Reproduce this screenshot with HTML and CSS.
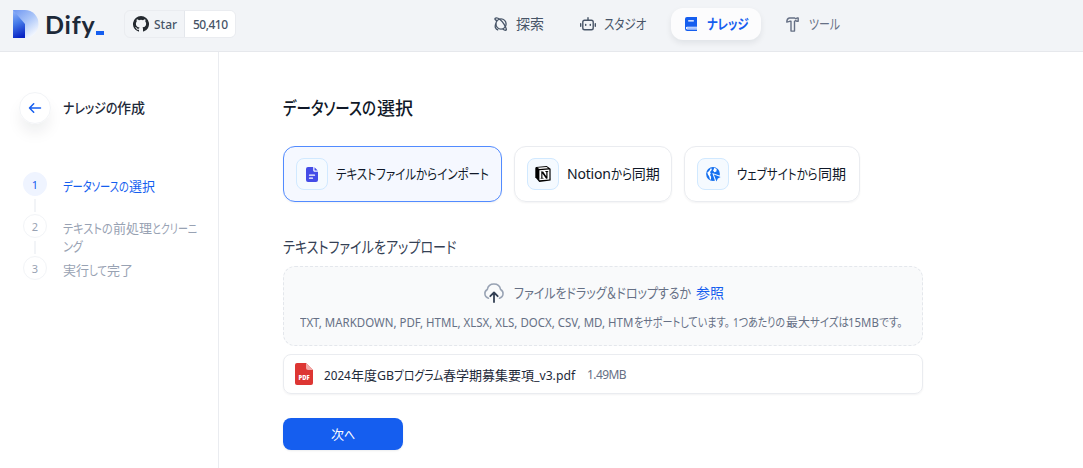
FILE: index.html
```html
<!DOCTYPE html>
<html lang="ja">
<head>
<meta charset="utf-8">
<title>Dify</title>
<link rel="stylesheet" href="styles.css">
</head>
<body>
<header class="topbar">
  <a class="brand">
    <svg class="brand-mark" width="26" height="28" viewBox="0 0 26 28">
      <defs>
        <linearGradient id="stem" x1="0.3" y1="0" x2="0.5" y2="1"><stop offset="0" stop-color="#8db0f8"/><stop offset=".45" stop-color="#467be9"/><stop offset="1" stop-color="#0723c4"/></linearGradient>
        <linearGradient id="bowl" x1="0" y1="0" x2=".75" y2="1"><stop offset="0" stop-color="#6e96f2"/><stop offset=".5" stop-color="#a9c4f8"/><stop offset="1" stop-color="#fafcff"/></linearGradient>
      </defs>
      <path d="M0 0h12a13.5 14 0 0 1 0 28H0z" fill="url(#bowl)"/>
      <path d="M0 0l12 14v14H0z" fill="url(#stem)"/>
    </svg>
    <span class="brand-name">Dify</span><span class="brand-cursor"></span>
  </a>
  <div class="stars">
    <span class="stars-label">
      <svg width="16" height="16" viewBox="0 0 16 16" fill="#24292f"><path d="M8 0a8 8 0 0 0-2.53 15.59c.4.07.55-.17.55-.38v-1.49c-2.23.48-2.7-.95-2.7-.95-.36-.92-.89-1.17-.89-1.17-.73-.5.05-.49.05-.49.81.06 1.23.83 1.23.83.72 1.23 1.88.87 2.34.67.07-.52.28-.88.51-1.08-1.78-.2-3.64-.89-3.64-3.95 0-.88.31-1.59.82-2.15-.08-.2-.36-1.01.08-2.12 0 0 .67-.21 2.2.82a7.6 7.6 0 0 1 4 0c1.53-1.04 2.2-.82 2.2-.82.44 1.11.16 1.92.08 2.12.51.56.82 1.27.82 2.15 0 3.07-1.87 3.75-3.65 3.95.29.25.54.73.54 1.48v2.2c0 .21.15.46.55.38A8 8 0 0 0 8 0z"/></svg>
      Star
    </span>
    <span class="stars-count">50,410</span>
  </div>
  <nav class="nav">
    <a class="nav-item explore">
      <svg width="14" height="14" viewBox="0 0 14 14" fill="none" stroke="#475467" stroke-width="1.3"><circle cx="7" cy="7" r="5.100"/><path d="M3.200 3.600C.8 3.200.4 1.600 1.700 1.100 4 .3 8 3.800 10 7.200s3 5.700 1.900 6c-.8.200-2-.3-3.300-1.300M1.900 6.500C.4 9.500 1.500 12.500 4.200 13"/></svg>
      <span>探索</span>
    </a>
    <a class="nav-item studio">
      <svg width="16" height="14" viewBox="0 0 16 14" fill="none" stroke="#475467" stroke-width="1.4" stroke-linecap="round"><rect x="2.800" y="3.200" width="10.400" height="9.600" rx="1.800"/><path d="M8 3V.8M.7 6.800v2.400M15.300 6.800v2.400"/><path d="M5.700 7.600v.6M10.300 7.600v.6" stroke-width="1.500"/></svg>
      <span class="fit fit-studio">スタジオ</span>
    </a>
    <a class="nav-item knowledge">
      <svg width="12" height="14" viewBox="0 0 12 14"><path d="M2 0h10v9.800H2.200a1.200 1.200 0 0 0 0 2.600H12V14H2.200A2.200 2.200 0 0 1 0 11.800V2a2 2 0 0 1 2-2z" fill="#155eef"/><path d="M2.200 10.300H12v1.600H2.200z" fill="#9bbcff"/><path d="M3.200 3.200h5.600v1.300H3.200z" fill="#fff"/></svg>
      <span class="fit fit-knowledge">ナレッジ</span>
    </a>
    <a class="nav-item tools">
      <svg width="13" height="15" viewBox="0 0 13 15" fill="none" stroke="#667085" stroke-width="1.400" stroke-linejoin="round"><path d="M3.400 1h5.300l1 .8 1.300-.8h1.200v3.300H11l-1.300-.7-1.200.7v9.800H5V4.300H3.700L.8 5.100C.8 3 1.800 1.400 3.400 1z"/></svg>
      <span class="fit fit-tools">ツール</span>
    </a>
  </nav>
</header>
<div class="body">
  <aside class="sidebar">
    <div class="side-head">
      <span class="back"><svg width="14" height="12" viewBox="0 0 14 12" fill="none" stroke="#155eef" stroke-width="1.500" stroke-linecap="round" stroke-linejoin="round"><path d="M12.500 6H1.500M5.700 1.800 1.500 6l4.200 4.200"/></svg></span>
      <span class="side-title"><span class="fit fit-side">ナレッジの</span>作成</span>
    </div>
    <ol class="steps">
      <li class="step active"><span class="num">1</span><span class="step-text"><span class="fit fit-s1">データソースの</span>選択</span></li>
      <li class="step"><span class="num">2</span><span class="step-text"><span class="fit fit-s2a">テキストの</span>前処理<span class="fit fit-s2b">とクリーニ</span><br><span class="fit fit-s2c">ング</span></span></li>
      <li class="step"><span class="num">3</span><span class="step-text">実行<span class="fit fit-s3">して</span>完了</span></li>
    </ol>
  </aside>
  <main class="main">
    <h1 class="title"><span class="fit fit-title">データソースの</span>選択</h1>
    <div class="sources">
      <div class="source selected">
        <span class="source-icon"><svg width="12" height="15" viewBox="0 0 12 15"><path d="M2 0h5.200v3.300c0 .9.600 1.500 1.500 1.500H12V13a2 2 0 0 1-2 2H2a2 2 0 0 1-2-2V2a2 2 0 0 1 2-2z" fill="#444ce7"/><path d="M8.500.3 11.700 3.500H9.100a.6.6 0 0 1-.6-.6z" fill="#444ce7"/><path d="M3.500 8.200h5M3.500 11.200h3" stroke="#fff" stroke-width="1.300" stroke-linecap="round"/></svg></span>
        <span class="fit fit-c1">テキストファイルからインポート</span>
      </div>
      <div class="source">
        <span class="source-icon"><svg width="16" height="16" viewBox="0 0 16 16"><path d="M1.200.9 11.700.1 15.600 2.800V14.500L4.300 15.900.3 11.300V1.800z" fill="#000"/><path d="M2.400 1.700 11.500 1l1.700 1.300-8.600.6z" fill="#fff"/><path d="M4.400 4.200 14.400 3.500v10L4.400 14.300z" fill="#fff"/><path d="M5.700 5.400h2.400l3.200 4.800V6l-1-.2v-.7l3-.2v.7l-.8.3v6.700l-1.400.2L7.400 7.600v4.200l1.200.2v.6l-3 .2v-.6l.7-.4V6.200z" fill="#000"/></svg></span>
        <span class="label"><span class="latin">Notion</span><span class="fit fit-c2">から</span>同期</span>
      </div>
      <div class="source">
        <span class="source-icon"><svg width="15" height="15" viewBox="0 0 15 15"><circle cx="7" cy="7" r="6.900" fill="#1570ef"/><path d="M4.800 1.300c1.200.1 1.300 1.500.5 2.200L4 5 4.800 6.400l-.8 1.600 1.100 1.800-.2 2.900-1-.4L3.300 9.800 1.800 7.200 1.300 5.600 3.200 4z" fill="#fff"/><path d="M8.300.8 10.700 1.900 10.400 4.600l-2.300.7-.8-2.100z" fill="#fff"/><path d="M6.300 6.100 15 9v1.500l-2.500 1.300-1.400 3.200H9.400z" fill="#f5faff"/><path d="m7.800 7.500 6.800 2.500-2.800 1.400L10.500 14.400z" fill="#1570ef"/></svg></span>
        <span class="label"><span class="fit fit-c3">ウェブサイトから</span>同期</span>
      </div>
    </div>
    <div class="upload-title"><span class="fit fit-upload">テキストファイルをアップロード</span></div>
    <div class="dropzone">
      <div class="drop-line">
        <svg width="22" height="20" viewBox="0 0 22 20" fill="none" stroke-linecap="round" stroke-linejoin="round"><path d="M5.500 15.200A4.700 4.700 0 0 1 4.300 6.500a6.800 6.800 0 0 1 13.300 0 4.700 4.700 0 0 1-1.100 8.700" stroke="#98a2b3" stroke-width="1.500"/><path d="M11 19V9.800M7.300 13.200 11 9.500l3.700 3.700" stroke="#344054" stroke-width="1.800"/></svg>
        <span class="drop-text"><span class="fit fit-drop">ファイルをドラッグ＆ドロップするか</span></span><span class="browse">参照</span>
      </div>
      <div class="drop-hint"><span class="fit fit-types">TXT, MARKDOWN, PDF, HTML, XLSX, XLS, DOCX, CSV, MD, HTM</span><span class="fit fit-h1">をサポートしています。</span><span class="fit fit-h2">1つあたりの</span>最大<span class="fit fit-h3">サイズは</span><span class="fit fit-h4">15MB</span><span class="fit fit-h5">です。</span></div>
    </div>
    <div class="file">
      <svg width="18" height="22" viewBox="0 0 18 22"><path d="M2 0h9l7 7v13a2 2 0 0 1-2 2H2a2 2 0 0 1-2-2V2a2 2 0 0 1 2-2z" fill="#dd3633"/><path d="M11 0l7 7h-5a2 2 0 0 1-2-2z" fill="#f2aaa8"/><text class="pdf-tag" x="9" y="17" text-anchor="middle" textLength="11" lengthAdjust="spacingAndGlyphs">PDF</text></svg>
      <span class="file-name"><span class="fit fit-f1">2024</span>年度<span class="fit fit-f2">GB</span><span class="fit fit-f3">プログラム</span>春学期募集要項<span class="fit fit-f4">_v3.pdf</span></span>
      <span class="file-size">1.49MB</span>
    </div>
    <button class="next" type="button">次<span class="fit fit-next">へ</span></button>
  </main>
</div>
</body>
</html>
```

FILE: styles.css
```css
* { box-sizing: border-box; }
body {
  margin: 0;
  height: 468px;
  overflow: hidden;
  background: #fff;
  color: #101828;
  font: 14px/20px "Noto Sans", "Noto Sans CJK JP", sans-serif;
}
svg { display: block; flex: none; }

/* Condensed runs: the box keeps its set width while the glyphs are narrowed. */
.fit {
  display: inline-block;
  white-space: nowrap;
  transform: scaleX(.85);
  transform-origin: 0 50%;
  font-feature-settings: "palt";
}

.topbar {
  display: flex;
  height: 52px;
  padding-left: 13px;
  background: #f2f4f7;
  border-bottom: 1px solid #e6e8ec;
}
.brand { display: flex; width: 111px; padding-top: 10px; }
.brand-name {
  margin-left: 6px;
  width: 50px;
  font: 700 25px/28px Lato, sans-serif;
  letter-spacing: .8px;
  color: #1d2939;
}
.brand-cursor { width: 8px; height: 4px; margin: 21px 0 0 1px; background: #155eef; }
.stars {
  display: flex;
  width: 112px;
  height: 28px;
  margin-top: 10px;
  border: 1px solid #eaecf0;
  border-radius: 6px;
  overflow: hidden;
  font-size: 12px;
  line-height: 27px;
  font-weight: 500;
  color: #475467;
}
.stars-label {
  display: flex;
  align-items: center;
  gap: 5px;
  width: 60px;
  padding-left: 8px;
  border-right: 1px solid #e4e7ec;
}
.stars-count { flex: 1; padding-left: 8px; background: #fff; letter-spacing: -.5px; }
.nav { display: flex; margin: 8px 0 0 257px; }
.nav-item {
  display: flex;
  align-items: center;
  height: 32px;
  color: #475467;
}
.explore { gap: 8px; width: 87px; padding-left: 1px; }
.studio { gap: 8px; width: 91px; }
.knowledge {
  gap: 10px;
  width: 90px;
  padding-left: 14px;
  border-radius: 12px;
  background: #fcfcfd;
  box-shadow: 0 3px 6px rgba(16, 24, 40, .08);
  color: #155eef;
  font-weight: 700;
}
.tools { gap: 10px; margin-left: 25px; color: #667085; }

.body { display: flex; height: 416px; }
.sidebar { width: 219px; border-right: 1px solid #eaecf0; padding: 40px 0 0 19px; }
.side-head { display: flex; align-items: center; gap: 12px; height: 32px; }
.back {
  display: flex;
  align-items: center;
  justify-content: center;
  width: 32px;
  height: 32px;
  border: 1px solid #f2f4f7;
  border-radius: 50%;
  box-shadow: 0 10px 16px -2px rgba(16, 24, 40, .08);
}
.side-title { font-weight: 500; color: #1d2939; white-space: nowrap; }
.steps { list-style: none; margin: 48px 0 0 4px; padding: 0; }
.step { position: relative; display: flex; height: 42px; gap: 16px; color: #98a2b3; }
.step:not(:last-child)::after {
  content: "";
  position: absolute;
  left: 11px;
  top: 27px;
  width: 2px;
  height: 13px;
  background: #f2f4f7;
}
.num {
  width: 24px;
  height: 24px;
  border: 1px solid #f2f4f7;
  border-radius: 50%;
  text-align: center;
  font-size: 11px;
  line-height: 23px;
}
.step-text { padding-top: 4.5px; font-size: 13px; line-height: 18px; white-space: nowrap; }
.active { color: #155eef; }
.active .num { background: #eff4ff; border-color: #eff4ff; }

.main { width: 704px; padding: 43px 0 0 64px; }
.title { margin: 0; font-size: 18px; line-height: 26px; font-weight: 500; white-space: nowrap; }
.sources { display: flex; gap: 12px; margin-top: 25px; }
.source {
  display: flex;
  align-items: center;
  gap: 8px;
  width: 176px;
  height: 56px;
  padding-left: 12px;
  border: 1px solid #eaecf0;
  border-radius: 12px;
  box-shadow: 0 1px 2px rgba(16, 24, 40, .05);
  white-space: nowrap;
}
.source:nth-child(2) { width: 158px; }
.source.selected { width: 219px; background: #f5f8ff; border-color: #528bff; }
.source-icon {
  display: flex;
  align-items: center;
  justify-content: center;
  width: 32px;
  height: 32px;
  background: #f5faff;
  border: 1px solid #d1e9ff;
  border-radius: 8px;
}
.upload-title { margin-top: 33px; font-size: 16px; line-height: 24px; color: #344054; white-space: nowrap; }
.dropzone {
  width: 640px;
  height: 80px;
  margin-top: 7px;
  padding-top: 16px;
  border: 1px dashed #e4e7ec;
  border-radius: 12px;
  background: #f9fafb;
  color: #667085;
}
.drop-line { display: flex; align-items: center; height: 20px; padding-left: 199px; white-space: nowrap; }
.drop-text { margin-left: 9px; width: 182px; }
.browse { color: #155eef; }
.drop-hint { margin-top: 11px; padding-left: 16px; font-size: 12px; line-height: 18px; white-space: nowrap; }
.file {
  display: flex;
  align-items: center;
  width: 640px;
  height: 40px;
  margin-top: 8px;
  padding-left: 11px;
  border: 1px solid #eaecf0;
  border-radius: 8px;
  box-shadow: 0 1px 2px rgba(16, 24, 40, .05);
  font-size: 13px;
  white-space: nowrap;
}
.pdf-tag { font: 800 6px "Open Sans", sans-serif; fill: #fff; }
.file-name { width: 251px; margin-left: 11px; padding-top: 2px; color: #1d2939; }
.file-size { margin-left: 12px; padding-top: 1px; font-size: 12px; letter-spacing: -.6px; color: #667085; }
.next {
  display: block;
  width: 120px;
  height: 32px;
  margin-top: 24px;
  padding: 0;
  border: 0;
  border-radius: 8px;
  background: #155eef;
  color: #fff;
  font: 400 13px/32px "Noto Sans CJK JP", sans-serif;
  box-shadow: 0 1px 2px rgba(16, 24, 40, .08);
}

.fit-studio { width: 43px; transform: scaleX(.82); }
.fit-knowledge { width: 43px; transform: scaleX(.81); }
.fit-tools { width: 32px; transform: scaleX(.78); }
.fit-side { width: 54px; }
.fit-s1 { width: 66px; transform: scaleX(.79); }
.fit-s2a { width: 50px; transform: scaleX(.86); }
.fit-s2b { width: 46px; transform: scaleX(.77); }
.fit-s2c { width: 20px; }
.fit-s3 { width: 18px; transform: scaleX(.8); }
.fit-title { width: 94px; transform: scaleX(.805); }
.fit-c1 { width: 153px; transform: scaleX(.823); }
.latin { letter-spacing: -.2px; }
.fit-c2 { width: 21px; transform: scaleX(.82); }
.fit-c3 { width: 81px; transform: scaleX(.82); }
.fit-upload { width: 174px; transform: scaleX(.817); }
.fit-drop { width: 178px; transform: scaleX(.855); }
.fit-types { width: 334px; transform: scaleX(.956); }
.fit-h1 { width: 99px; transform: scaleX(.84); }
.fit-h2 { width: 53px; transform: scaleX(.83); }
.fit-h3 { width: 38px; transform: scaleX(.87); }
.fit-h4 { width: 31px; transform: scaleX(.95); }
.fit-h5 { width: 26px; transform: scaleX(.88); }
.fit-f1 { width: 27px; transform: scaleX(.9); }
.fit-f2 { width: 17px; transform: scaleX(.95); }
.fit-f3 { width: 49px; transform: scaleX(.83); }
.fit-f4 { width: 41px; transform: scaleX(.94); }
.fit-next { width: 11px; }
```
